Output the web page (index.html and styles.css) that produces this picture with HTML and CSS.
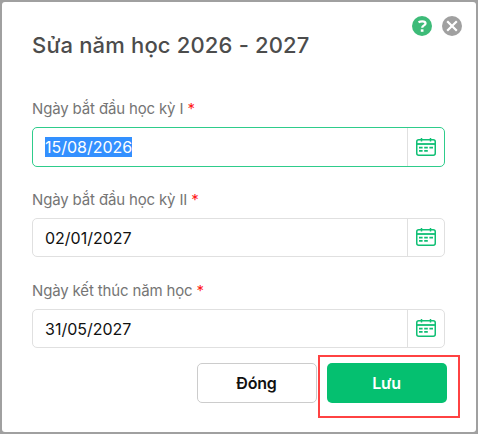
FILE: index.html
```html
<!DOCTYPE html>
<html lang="vi">
<head>
<meta charset="utf-8">
<title>Sửa năm học</title>
<link rel="stylesheet" href="styles.css">
</head>
<body>
<svg class="defs" width="0" height="0" aria-hidden="true">
  <symbol id="calendar" viewBox="0 0 20 18">
    <rect x="0.75" y="1.75" width="18.5" height="15.5" rx="2" fill="none" stroke="currentColor" stroke-width="1.5"/>
    <path d="M1 6H19" stroke="currentColor" stroke-width="1.8"/>
    <path d="M5.5 0V3.6M14.5 0V3.6" stroke="currentColor" stroke-width="1.5"/>
    <path d="M3 9.7H6.6M8.2 9.7H11.8M13.4 9.7H17M3 12.9H6.6M8.2 12.9H11.8" stroke="currentColor" stroke-width="1.7"/>
  </symbol>
</svg>
<main class="dialog">
  <header class="header">
    <h1 class="title">Sửa năm học 2026 - 2027</h1>
    <div class="tools">
      <svg class="tool" viewBox="0 0 20 20"><circle cx="10" cy="10" r="10" fill="#3dbb78"/><path d="M6.5 6.2C7.7 5.6 8.9 5.4 10.2 5.4C12.2 5.4 13.5 6.1 13.5 7.5C13.5 9.5 10.2 9.3 10.2 11.8" fill="none" stroke="#fff" stroke-width="2.3"/><path d="M8.8 13.3H11.5V15.8H8.8Z" fill="#fff"/></svg>
      <svg class="tool" viewBox="0 0 20 20"><circle cx="10" cy="10" r="10" fill="#a0a0a0"/><path d="M5.2 5.2L14.8 14.8M14.8 5.2L5.2 14.8" stroke="#fff" stroke-width="2.2"/></svg>
    </div>
  </header>
  <form class="fields">
    <div class="field">
      <label class="label">Ngày bắt đầu học kỳ I <span class="required">*</span></label>
      <div class="control focused"><span class="value"><span class="selected">15/08/2026</span></span><span class="picker"><svg class="calendar"><use href="#calendar"/></svg></span></div>
    </div>
    <div class="field">
      <label class="label">Ngày bắt đầu học kỳ II <span class="required">*</span></label>
      <div class="control"><span class="value">02/01/2027</span><span class="picker"><svg class="calendar"><use href="#calendar"/></svg></span></div>
    </div>
    <div class="field">
      <label class="label">Ngày kết thúc năm học <span class="required">*</span></label>
      <div class="control"><span class="value">31/05/2027</span><span class="picker"><svg class="calendar"><use href="#calendar"/></svg></span></div>
    </div>
  </form>
  <footer class="actions">
    <button class="button close">Đóng</button>
    <div class="highlight"><button class="button save">Lưu</button></div>
  </footer>
</main>
</body>
</html>
```
FILE: styles.css
```css
* { box-sizing: border-box; }
body {
  margin: 0;
  padding: 2px;
  height: 434px;
  background: #a0a0a0;
  font-family: Inter, sans-serif;
  overflow: hidden;
}
.defs { position: absolute; }
.dialog {
  height: 430px;
  background: #fff;
  border-radius: 3px;
  padding: 0 0 0 30px;
}
.header {
  display: flex;
  justify-content: space-between;
  height: 95px;
  padding: 14px 14px 0 0;
}
.title {
  margin: 14px 0 0;
  font-size: 22px;
  line-height: 30px;
  font-weight: 500;
  letter-spacing: 0.17px;
  color: #4c4c4c;
  white-space: nowrap;
}
.tools { display: flex; gap: 10px; }
.tool { width: 20px; height: 20px; }
.fields { width: 413px; }
.field { height: 91px; }
.label {
  display: block;
  height: 30px;
  padding-top: 2px;
  font-size: 15px;
  line-height: 20px;
  letter-spacing: -0.15px;
  color: #757575;
  white-space: nowrap;
}
.required { color: #ff1a1a; }
.control {
  display: flex;
  height: 39px;
  border: 1px solid #e0e0e0;
  border-radius: 5px;
}
.focused { height: 40px; border-color: #2ecc8b; }
.value {
  flex: 1;
  display: flex;
  align-items: center;
  padding-left: 12px;
  font-size: 16px;
  color: #111;
}
.selected { background: #3390ff; color: #fff; line-height: 20px; }
.picker {
  width: 37px;
  padding: 9px 0 0 8px;
  border-left: 1px solid #e0e0e0;
  color: #0fbf74;
}
.focused .picker { padding-top: 10px; }
.calendar { display: block; width: 20px; height: 18px; }
.actions {
  display: flex;
  justify-content: flex-end;
  padding-right: 16px;
  margin-top: -15px;
  gap: 1px;
}
.button {
  width: 120px;
  height: 40px;
  padding: 0 1px 0 0;
  border-radius: 5px;
  font: 600 16px/20px Inter, sans-serif;
  letter-spacing: -0.2px;
}
.close { margin-top: 8px; border: 1px solid #ccc; background: #fff; color: #111; }
.highlight { width: 142px; height: 63px; padding: 6px 0 0 7px; border: 2px solid #ff4242; }
.save { border: 0; background: #05c070; color: #fff; }
```
